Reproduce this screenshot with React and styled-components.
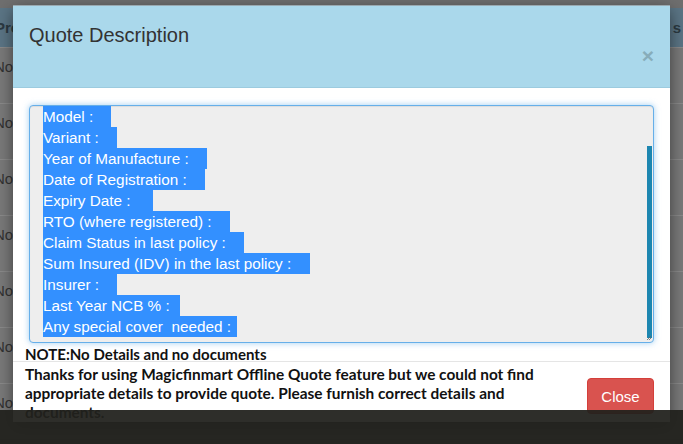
import styled, { createGlobalStyle } from 'styled-components';

const GlobalStyle = createGlobalStyle`
  html, body { margin: 0; padding: 0; }
  body { width: 683px; height: 444px; overflow: hidden; font-family: "Liberation Sans", Arial, sans-serif; }
`;

const Page = styled.div`
  position: relative;
  width: 683px;
  height: 444px;
  overflow: hidden;
  background: #6f6f6f;
  padding-top: 8px;
  box-sizing: border-box;
`;

const Table = styled.div`
  display: flex;
  flex-direction: column;
`;

const HeadRow = styled.div`
  height: 39px;
  background: #5b7585;
  display: flex;
  align-items: center;
  justify-content: space-between;
  color: #2c3a42;
  font-size: 15px;
  font-weight: bold;
  padding-right: 2px;
  margin-left: -5px;
`;

const Row = styled.div`
  height: 56px;
  box-sizing: border-box;
  padding-top: 10px;
  border-top: 1px solid #8a8a8a;
  background: #7a7a7a;
  color: #333;
  font-size: 15px;
  margin-left: -6px;
`;

const Modal = styled.div`
  position: absolute;
  left: 13px;
  top: 5px;
  width: 657px;
  background: #fff;
  box-shadow: 0 5px 15px rgba(0, 0, 0, 0.5);
  border-top: 1px solid #9aa9b0;
`;

const Header = styled.div`
  height: 82px;
  background: #aad8eb;
  border-bottom: 1px solid #9ccbdf;
  display: flex;
  justify-content: space-between;
  box-sizing: border-box;
  padding: 0 16px;
`;

const Title = styled.h4`
  margin: 16px 0 0;
  font-size: 20px;
  font-weight: normal;
  color: #333;
  line-height: 26px;
`;

const CloseX = styled.span`
  margin-top: 39px;
  font-size: 21px;
  font-weight: bold;
  line-height: 1;
  color: #87adba;
  height: 21px;
`;

const Body = styled.div`
  padding: 17px 16px 0;
`;

const TextArea = styled.div`
  position: relative;
  height: 238px;
  box-sizing: border-box;
  border: 1px solid #66afe9;
  border-radius: 4px;
  box-shadow: inset 0 1px 1px rgba(0,0,0,.075), 0 0 6px rgba(102,175,233,.6);
  background: #eee;
  overflow: hidden;
  padding: 0 13px;
  font-size: 15.3px;
  line-height: 21px;
`;

const Line = styled.div`
  width: ${p => p.$w}px;
  height: 21px;
  background: #3390ff;
  color: #fff;
  white-space: nowrap;
`;

const Scrollbar = styled.div`
  position: absolute;
  right: 1px;
  top: 40px;
  bottom: 4px;
  width: 5px;
  background: #1c86b0;
`;

const Grip = styled.svg`
  position: absolute;
  right: 1px;
  bottom: 1px;
`;

const Note = styled.div`
  font-family: Lato, "Open Sans", sans-serif;
  font-weight: bold;
  font-size: 15px;
  line-height: 16px;
  color: #111;
  margin: 3px 0 0 -4px;
  height: 15px;
  white-space: nowrap;
`;

const Footer = styled.div`
  border-top: 1px solid #e5e5e5;
  display: flex;
  align-items: center;
  justify-content: space-between;
  padding: 3px 16px 0 12px;
`;

const FooterText = styled.div`
  width: 530px;
  font-family: Lato, "Open Sans", sans-serif;
  font-weight: bold;
  font-size: 15.4px;
  line-height: 19px;
  color: #111;
`;

const Button = styled.button`
  width: 67px;
  height: 36px;
  margin-top: 5px;
  border: 1px solid #d43f3a;
  border-radius: 4px;
  background: #d9534f;
  color: #fff;
  font-family: "Liberation Sans", Arial, sans-serif;
  font-size: 15px;
  padding: 0;
`;

const Taskbar = styled.div`
  position: absolute;
  left: 0;
  right: 0;
  top: 410px;
  bottom: 0;
  background: rgba(33, 33, 29, 0.94);
`;

const lines = [
  ['Model :', 68],
  ['Variant :', 74],
  ['Year of Manufacture :', 164],
  ['Date of Registration :', 162],
  ['Expiry Date :', 110],
  ['RTO (where registered) :', 187],
  ['Claim Status in last policy :', 201],
  ['Sum Insured (IDV) in the last policy :', 267],
  ['Insurer :', 74],
  ['Last Year NCB % :', 137],
  ['Any special cover  needed :', 194],
];

export default function App() {
  return (
    <>
      <GlobalStyle />
      <Page>
        <Table>
          <HeadRow><span>Pro</span><span>s</span></HeadRow>
          {[0, 1, 2, 3, 4, 5, 6].map(i => (
            <Row key={i}>Not</Row>
          ))}
        </Table>
        <Modal>
          <Header>
            <Title>Quote Description</Title>
            <CloseX>×</CloseX>
          </Header>
          <Body>
            <TextArea>
              {lines.map(([t, w]) => (
                <Line key={t} $w={w}>{t.replace(/  /g, '\u00a0 ')}</Line>
              ))}
              <Scrollbar />
              <Grip width="6" height="6" viewBox="0 0 6 6">
                <path d="M5 1 L1 5 M5 3 L3 5" stroke="#666" strokeWidth="0.8" />
              </Grip>
            </TextArea>
            <Note>NOTE:No Details and no documents</Note>
          </Body>
          <Footer>
            <FooterText>
              Thanks for using Magicfinmart Offline Quote feature but we could not find appropriate details to provide quote. Please furnish correct details and documents.
            </FooterText>
            <Button>Close</Button>
          </Footer>
        </Modal>
        <Taskbar />
      </Page>
    </>
  );
}
